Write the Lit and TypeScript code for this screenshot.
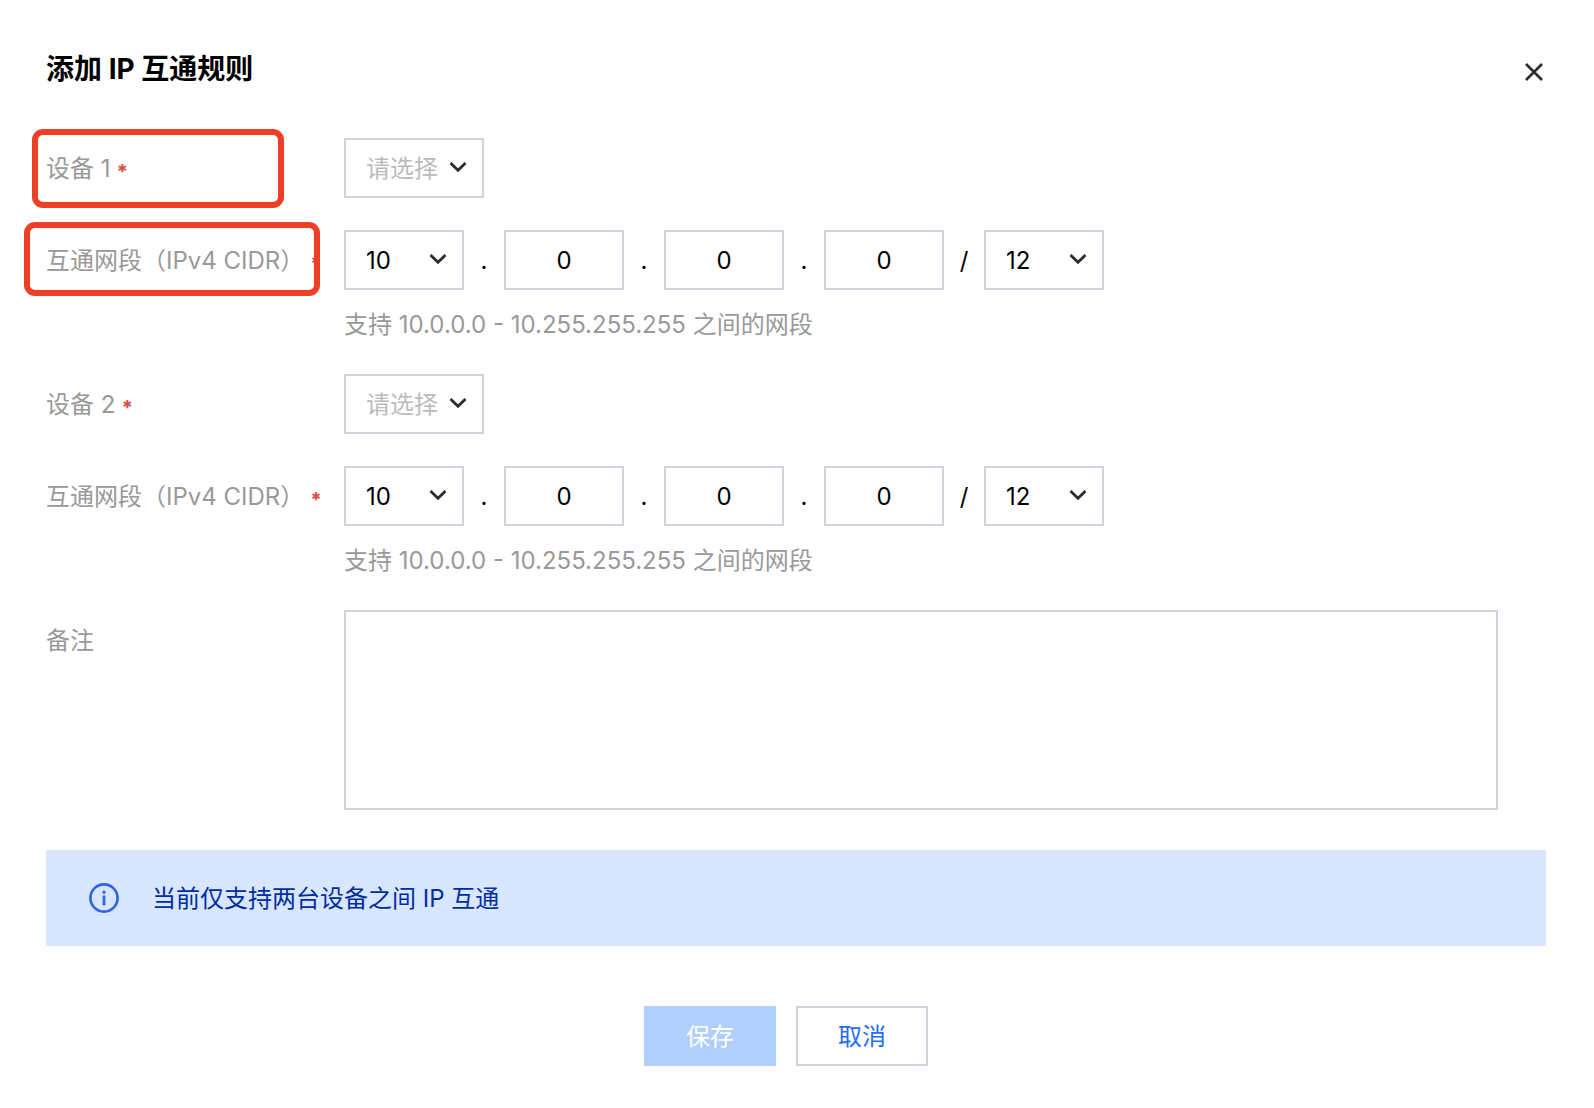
import { LitElement, html, css, svg } from "lit";
import { customElement, property } from "lit/decorators.js";

const chevron = html`<svg class="chevron" width="18" height="12" viewBox="0 0 18 12" aria-hidden="true">
  ${svg`<path d="M1.5 2L9 9.3L16.5 2" fill="none" stroke="#2b2b2e" stroke-width="2.8" />`}
</svg>`;

const controlStyles = css`
  *,
  *::before,
  *::after {
    box-sizing: border-box;
  }
  select,
  input,
  textarea,
  button {
    margin: 0;
    font: inherit;
    border-radius: 0;
    appearance: none;
  }
  .control {
    height: 60px;
    border: 2px solid #cfd4df;
    background: #fff;
    color: #000;
  }
  .picker {
    display: inline-grid;
    align-items: center;
    justify-self: start;
  }
  .picker > * {
    grid-area: 1 / 1;
  }
  .picker select {
    width: 120px;
    padding: 2px 20px 0;
  }
  .picker.wide select {
    width: 140px;
    color: #bbb;
  }
  .chevron {
    justify-self: end;
    margin-right: 17px;
    margin-bottom: 2px;
    pointer-events: none;
  }
`;

@customElement("cidr-input")
export class CidrInput extends LitElement {
  @property() name = "";

  static styles = [
    controlStyles,
    css`
      :host {
        display: block;
      }
      .parts {
        display: flex;
        flex-wrap: wrap;
        align-items: center;
      }
      .octet {
        width: 120px;
        padding: 0;
        text-align: center;
      }
      .mark {
        width: 40px;
        padding-top: 2px;
        text-align: center;
      }
      .hint {
        margin: 18px 0 0;
        line-height: 34px;
        color: #999;
      }
    `,
  ];

  render() {
    return html`
      <div class="parts" role="group" aria-label=${this.name}>
        <span class="picker">
          <select class="control" aria-label="10">
            <option selected>10</option>
          </select>
          ${chevron}
        </span>
        ${[2, 3, 4].map(
          () => html`<span class="mark">.</span>
            <input class="control octet" type="text" inputmode="numeric" value="0" aria-label="0" />`
        )}
        <span class="mark">/</span>
        <span class="picker">
          <select class="control" aria-label="12">
            <option selected>12</option>
          </select>
          ${chevron}
        </span>
      </div>
      <p class="hint">支持 10.0.0.0 - 10.255.255.255 之间的网段</p>
    `;
  }
}

@customElement("app-root")
export class AppRoot extends LitElement {
  static styles = [
    controlStyles,
    css`
      :host {
        display: block;
        font: 24px/36px Inter, "Noto Sans CJK SC", sans-serif;
        color: #000;
        background: #fff;
      }
      .dialog {
        padding: 44px 48px 42px 46px;
      }
      .header {
        display: flex;
        align-items: flex-start;
        justify-content: space-between;
        margin-bottom: 38px;
      }
      .title {
        margin: 0;
        font-size: 28px;
        line-height: 50px;
        font-weight: 700;
      }
      .close {
        display: grid;
        place-items: center;
        width: 24px;
        height: 56px;
        padding: 0;
        border: 0;
        background: none;
      }
      .form {
        display: grid;
        gap: 32px;
      }
      .row {
        display: grid;
        grid-template-columns: 298px minmax(0, 1fr);
        align-items: start;
      }
      .label {
        position: relative;
        display: flex;
        align-items: center;
        gap: 6px;
        height: 60px;
        padding-top: 2px;
        color: #999;
        white-space: nowrap;
      }
      .required {
        padding-top: 6px;
        font-size: 20px;
        font-weight: 800;
        color: #d9514c;
      }
      .outline {
        position: absolute;
        border: 6px solid #ee3f25;
        border-radius: 11px;
        pointer-events: none;
      }
      .outline.device {
        inset: -9px 60px -10px -14px;
      }
      .outline.cidr {
        inset: -8px 24px -6px -22px;
      }
      .note {
        display: block;
        width: calc(100% - 48px);
        height: 200px;
        padding: 12px 20px;
        resize: none;
      }
      .alert {
        display: flex;
        align-items: center;
        gap: 33px;
        margin-top: 40px;
        padding: 30px 43px;
        background: #d8e6ff;
        color: #002da0;
      }
      .alert span {
        padding-top: 2px;
        line-height: 34px;
      }
      .actions {
        display: flex;
        justify-content: center;
        gap: 20px;
        margin-top: 60px;
        padding-right: 20px;
      }
      .button {
        width: 132px;
        height: 60px;
        padding: 2px 0 0;
        border: 2px solid #cfd4df;
        background: #fff;
        color: #216dff;
      }
      .button.primary {
        border-color: #b0cffc;
        background: #b0cffc;
        color: #fff;
      }
    `,
  ];

  private deviceRow(index: number, outlined: boolean) {
    const id = `device-${index}`;
    return html`<div class="row">
      <label class="label" for=${id}>
        <span>设备 ${index}</span><span class="required">*</span>
        ${outlined ? html`<span class="outline device"></span>` : null}
      </label>
      <div class="picker wide">
        <select class="control" id=${id}>
          <option selected>请选择</option>
        </select>
        ${chevron}
      </div>
    </div>`;
  }

  private cidrRow(outlined: boolean) {
    return html`<div class="row">
      <div class="label">
        <span>互通网段（IPv4 CIDR）</span><span class="required">*</span>
        ${outlined ? html`<span class="outline cidr"></span>` : null}
      </div>
      <cidr-input name="互通网段（IPv4 CIDR）"></cidr-input>
    </div>`;
  }

  render() {
    return html`
      <main class="dialog" lang="zh-CN">
        <header class="header">
          <h1 class="title">添加 IP 互通规则</h1>
          <button class="close" type="button" aria-label="关闭">
            <svg width="20" height="20" viewBox="0 0 20 20" aria-hidden="true">
              <path d="M2 2L18 18M18 2L2 18" fill="none" stroke="#2b2b2e" stroke-width="2.6" />
            </svg>
          </button>
        </header>
        <form class="form">
          ${this.deviceRow(1, true)} ${this.cidrRow(true)} ${this.deviceRow(2, false)} ${this.cidrRow(false)}
          <div class="row">
            <label class="label" for="note">备注</label>
            <textarea class="control note" id="note"></textarea>
          </div>
        </form>
        <div class="alert" role="status">
          <svg width="30" height="30" viewBox="0 0 30 30" aria-hidden="true">
            <circle cx="15" cy="15" r="13.6" fill="none" stroke="#2b66dd" stroke-width="2.6" />
            <path d="M15 12.5V22.3M15 7.8V10.8" stroke="#2b66dd" stroke-width="2.8" />
          </svg>
          <span>当前仅支持两台设备之间 IP 互通</span>
        </div>
        <div class="actions">
          <button class="button primary" type="button" disabled>保存</button>
          <button class="button" type="button">取消</button>
        </div>
      </main>
    `;
  }
}
